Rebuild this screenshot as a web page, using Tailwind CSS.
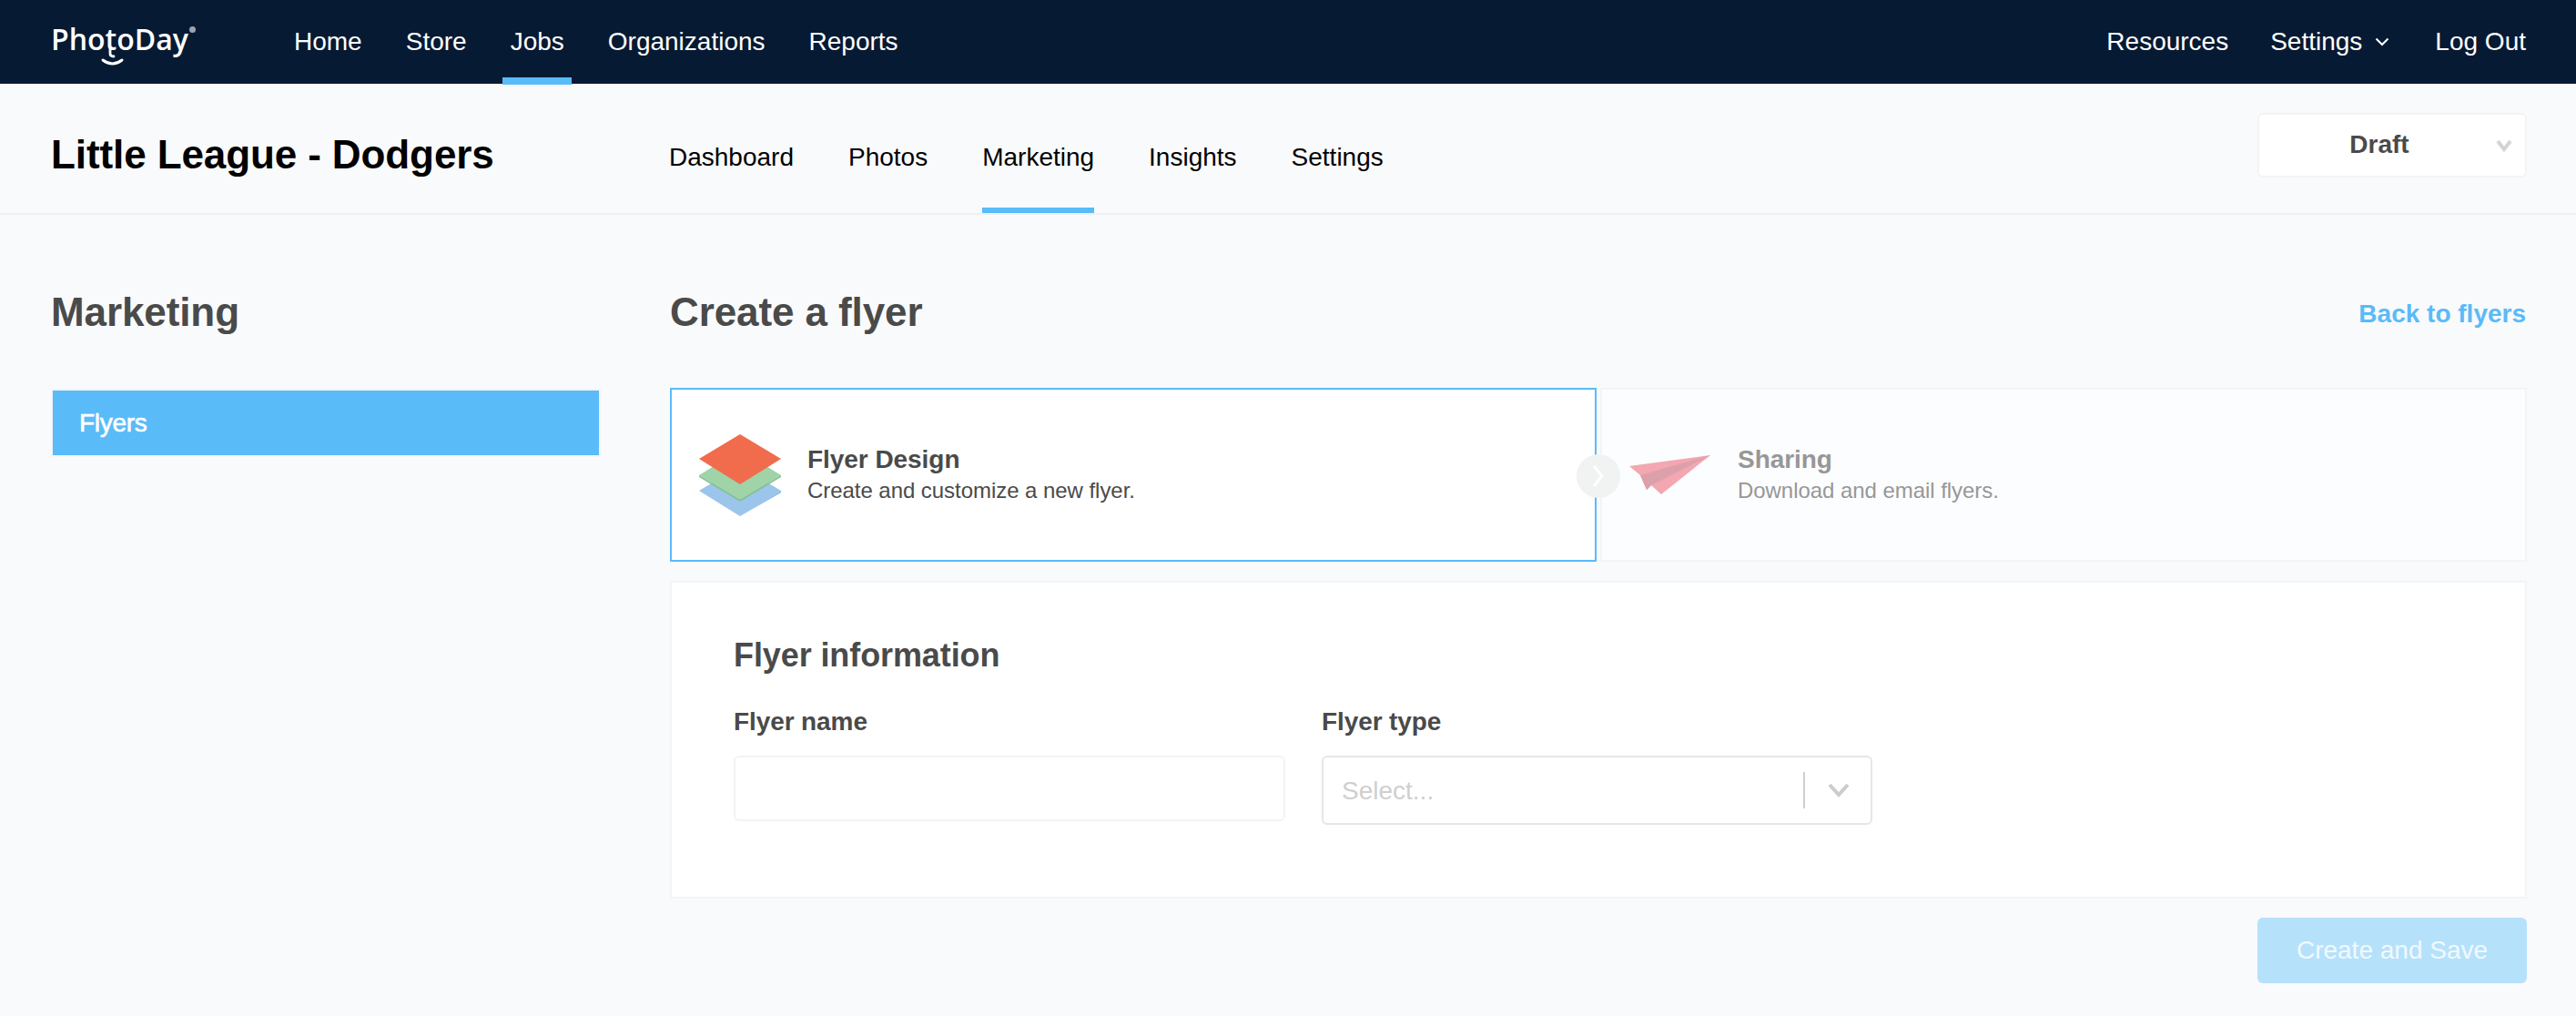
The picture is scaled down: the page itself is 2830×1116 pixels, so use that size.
<!doctype html>
<html>
<head>
<meta charset="utf-8">
<script src="https://cdn.jsdelivr.net/npm/@tailwindcss/browser@4"></script>
<title>PhotoDay</title>
</head>
<body class="bg-[#f9fafc] font-['Liberation_Sans',Arial,sans-serif] text-[#4a4a4a]">
  <!-- Top nav -->
  <header class="h-[92px] bg-[#071a33] text-white flex items-center justify-between pl-[56px] pr-[55px] text-[28px]">
    <div class="flex items-center">
      <div class="relative w-[267px] h-[92px]">
        <span class="absolute left-0 top-[21px] font-['Open_Sans',sans-serif] font-semibold text-[32px] leading-[44px]">PhotoDay</span>
        <svg class="absolute left-[50px] top-[50px]" width="100" height="28" viewBox="0 0 100 28" fill="none" stroke="white" stroke-linecap="round">
          <path d="M15 2v7q0 3 4 3" stroke-width="2.8"/>
          <path d="M7 16q10.500 8 21 0" stroke-width="3"/>
        </svg>
        <span class="absolute left-[152px] top-[29px] w-[7px] h-[7px] rounded-full bg-[#9aa3ae]"></span>
      </div>
      <nav class="flex items-center gap-[48px] -mt-[1px]">
        <a>Home</a>
        <a>Store</a>
        <a class="relative">Jobs<span class="absolute -left-[9px] -right-[8px] top-[60px] h-[8px] bg-[#59bbf8]"></span></a>
        <a>Organizations</a>
        <a>Reports</a>
      </nav>
    </div>
    <nav class="flex items-center gap-[48px] -mt-[1px]">
      <a class="-mr-[2px]">Resources</a>
      <a class="flex items-center gap-[14px]">Settings
        <svg width="16" height="10" viewBox="0 0 16 10" fill="none" stroke="white" stroke-width="2"><path d="M1.500 1.500 8 8l6.500-6.500"/></svg>
      </a>
      <a class="ml-[2px]">Log Out</a>
    </nav>
  </header>

  <!-- Job header -->
  <div class="h-[144px] border-b-2 border-[#eff0f3] flex pl-[56px] pr-[54px]">
    <h1 class="w-[679px] pt-[51px] text-[44px] leading-[54px] font-bold text-black tracking-[-0.1px]">Little League - Dodgers</h1>
    <nav class="flex gap-[60px] text-[28px] text-black">
      <a class="pt-[60px]">Dashboard</a>
      <a class="pt-[60px]">Photos</a>
      <a class="pt-[60px] h-[142px] border-b-[6px] border-[#59bbf8]">Marketing</a>
      <a class="pt-[60px]">Insights</a>
      <a class="pt-[60px]">Settings</a>
    </nav>
    <div class="ml-auto mt-[32px] w-[296px] h-[71px] bg-white border-2 border-[#f3f4f6] rounded-[6px] relative flex items-center justify-center pr-[28px] pb-[2px] text-[28px] font-bold text-[#4a4a4a]">
      Draft
      <svg class="absolute right-[14px] top-[27px]" width="18" height="14" viewBox="0 0 18 14" fill="none" stroke="#d4d4d4" stroke-width="4"><path d="M2 2l7 9 7-9"/></svg>
    </div>
  </div>

  <main class="flex pl-[56px] pr-[54px] pt-[85px] pb-[36px]">
    <!-- Sidebar -->
    <aside class="w-[604px] shrink-0 mr-[76px]">
      <h2 class="h-[44px] leading-[44px] text-[44px] font-bold tracking-[-0.1px]">Marketing</h2>
      <div class="mt-[62px] h-[75px] bg-[#59bbf8] border-2 border-[#f3f4f7] pl-[29px] flex items-center text-[28px] tracking-[-0.3px] text-white [-webkit-text-stroke:0.6px_white]">Flyers</div>
    </aside>

    <section class="flex-1">
      <div class="h-[44px] flex items-center justify-between">
        <h2 class="text-[44px] leading-[44px] font-bold tracking-[-0.1px]">Create a flyer</h2>
        <a class="text-[28px] font-bold text-[#59bbf8] pt-[4px] pr-[1px]">Back to flyers</a>
      </div>

      <!-- Steps -->
      <div class="mt-[61px] h-[191px] flex">
        <div class="relative w-[1018px] bg-white border-2 border-[#59bbf8] flex items-center pl-[29px]">
          <svg width="92" height="90" viewBox="0 0 92 90" class="shrink-0">
            <path d="M46 35 91 62 46 90 1 62Z" fill="#9cc5ec"/>
            <path d="M46 90 91 62v2L46 90Z" fill="#7fb4e8"/>
            <path d="M46 17 91 45 46 72 1 45Z" fill="#a0d3a8"/>
            <path d="M1 45 46 72 91 45v2L46 74 1 47Z" fill="#84c08f"/>
            <path d="M46 0 91 27 46 55 1 27Z" fill="#f06c4c"/>
          </svg>
          <div class="ml-[28px]">
            <div class="text-[28px] leading-[34px] font-bold tracking-[-0.05px]">Flyer Design</div>
            <div class="text-[24px] leading-[34px] tracking-[-0.05px]">Create and customize a new flyer.</div>
          </div>
          <div class="absolute -right-[28px] top-[71px] w-[48px] h-[48px] rounded-full bg-[#f1f2f2] flex items-center justify-center z-10">
            <svg width="14" height="26" viewBox="0 0 14 26" fill="none" stroke="white" stroke-width="3"><path d="M2 2l9 11-9 11"/></svg>
          </div>
        </div>
        <div class="flex-1 ml-[4px] bg-[#fcfdfe] border-2 border-[#f3f4f7] flex items-center pl-[30px]">
          <svg width="90" height="44" viewBox="0 0 90 44" class="shrink-0">
            <path d="M0 12 89 0 35 43 24 33 19 38 12 22Z" fill="#f3a7b0"/>
            <path d="M12 22 89 0 24 33 19 38Z" fill="#dca0aa"/>
          </svg>
          <div class="ml-[29px] text-[#979797]">
            <div class="text-[28px] leading-[34px] font-bold tracking-[-0.05px]">Sharing</div>
            <div class="text-[24px] leading-[34px] tracking-[-0.05px]">Download and email flyers.</div>
          </div>
        </div>
      </div>

      <!-- Form -->
      <div class="mt-[21px] h-[349px] bg-white border-2 border-[#f3f4f7] pl-[68px] pt-[58px]">
        <h3 class="text-[36px] leading-[44px] font-bold tracking-[-0.1px]">Flyer information</h3>
        <div class="mt-[34px] flex gap-[40px]">
          <div class="w-[606px]">
            <label class="block text-[28px] leading-[34px] font-bold tracking-[-0.1px]">Flyer name</label>
            <div class="mt-[20px] h-[72px] border-2 border-[#f3f3f3] rounded-[6px] bg-white"></div>
          </div>
          <div class="w-[605px]">
            <label class="block text-[28px] leading-[34px] font-bold tracking-[-0.1px]">Flyer type</label>
            <div class="mt-[20px] h-[76px] border-2 border-[#e6e6e6] rounded-[6px] bg-white flex items-center pl-[20px] text-[28px] text-[#cfcfcf]">
              <span class="flex-1 pt-[2px]">Select...</span>
              <span class="w-[2px] h-[40px] bg-[#cfcfcf]"></span>
              <svg class="ml-[25px] mr-[23px]" width="24" height="16" viewBox="0 0 24 16" fill="none" stroke="#cccccc" stroke-width="4"><path d="M2 2l10 11 10-11"/></svg>
            </div>
          </div>
        </div>
      </div>

      <div class="mt-[21px] flex justify-end">
        <button class="w-[296px] h-[72px] rounded-[6px] bg-[#b6e1fb] text-[28px] text-white/80">Create and Save</button>
      </div>
    </section>
  </main>
</body>
</html>
